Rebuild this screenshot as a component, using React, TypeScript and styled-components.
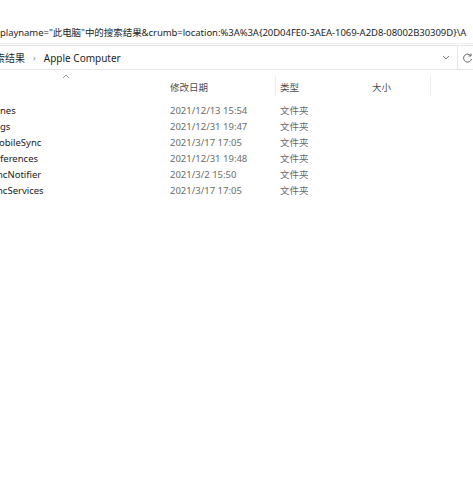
import { FC } from "react";
import styled, { createGlobalStyle } from "styled-components";

const GlobalStyle = createGlobalStyle`
	html, body {
		margin: 0;
		padding: 0;
		background: #fff;
	}
	body {
		font-family: "Noto Sans", "Noto Sans CJK SC", sans-serif;
		width: 473px;
		height: 477px;
		overflow: hidden;
	}
`;

const Page = styled.div`
	width: 473px;
	height: 477px;
	display: flex;
	flex-direction: column;
	overflow: hidden;
	background: #fff;
`;

const UrlLine = styled.div`
	height: 44px;
	box-sizing: border-box;
	padding-top: 25px;
	font-size: 9.5px;
	letter-spacing: -0.05px;
	line-height: 16px;
	color: #1e1e1e;
	white-space: nowrap;
	border-bottom: 1px solid #f0f0f0;
`;

const AddressBar = styled.div`
	margin-top: 1px;
	height: 25px;
	box-sizing: border-box;
	display: flex;
	align-items: center;
	border-top: 1px solid #e6e6e6;
	border-bottom: 1px solid #e6e6e6;
	font-size: 10px;
	color: #1e1e1e;
`;

const Crumbs = styled.div`
	flex: 1;
	display: flex;
	align-items: center;
	gap: 8px;
	white-space: nowrap;
`;

const CrumbHidden = styled.span`
	margin-left: -15px;
`;

const CrumbSep = styled.span`
	color: #888;
	font-size: 9px;
`;

const DropButton = styled.div`
	width: 22px;
	display: flex;
	justify-content: center;
	align-items: center;
`;

const Divider = styled.div`
	width: 1px;
	height: 23px;
	background: #e6e6e6;
`;

const RefreshButton = styled.div`
	width: 15px;
	display: flex;
	justify-content: flex-end;
	align-items: center;
`;

const HeaderRow = styled.div`
	position: relative;
	height: 27px;
	display: grid;
	grid-template-columns: 170px 105px 1px 96px 58px 1px;
	align-items: center;
	font-size: 9.5px;
	color: #4d4d4d;
	padding-top: 6px;
	box-sizing: border-box;
`;

const SortCaret = styled.svg`
	position: absolute;
	left: 62px;
	top: 4px;
`;

const HeadCell = styled.div<{ $pad?: number }>`
	padding-left: ${(p) => p.$pad ?? 0}px;
	white-space: nowrap;
`;

const ColLine = styled.div`
	width: 1px;
	height: 20px;
	background: #ececec;
	align-self: start;
`;

const List = styled.div`
	padding-top: 5px;
	display: flex;
	flex-direction: column;
`;

const Row = styled.div`
	height: 16px;
	display: grid;
	grid-template-columns: 170px 110px 1fr;
	align-items: center;
	font-size: 9.5px;
	white-space: nowrap;
`;

const NameCell = styled.div<{ $shift: number }>`
	color: #1a1a1a;
	margin-left: ${(p) => p.$shift}px;
`;

const MetaCell = styled.div`
	color: #6b6b6b;
`;

const rows = [
	{ name: "nes", shift: 0, date: "2021/12/13 15:54" },
	{ name: "gs", shift: 0, date: "2021/12/31 19:47" },
	{ name: "obileSync", shift: -1, date: "2021/3/17 17:05" },
	{ name: "ferences", shift: 0, date: "2021/12/31 19:48" },
	{ name: "ncNotifier", shift: -3, date: "2021/3/2 15:50" },
	{ name: "ncServices", shift: -3, date: "2021/3/17 17:05" },
];

const App: FC = () => {
	return (
		<Page>
			<GlobalStyle />
			<UrlLine>
				playname="此电脑"中的搜索结果&amp;crumb=location:%3A%3A{"{"}20D04FE0-3AEA-1069-A2D8-08002B30309D{"}"}\A
			</UrlLine>
			<AddressBar>
				<Crumbs>
					<CrumbHidden>搜索结果</CrumbHidden>
					<CrumbSep>›</CrumbSep>
					<span>Apple Computer</span>
				</Crumbs>
				<DropButton>
					<svg width="8" height="5" viewBox="0 0 8 5">
						<path d="M1 1 L4 4 L7 1" fill="none" stroke="#777" strokeWidth="1" />
					</svg>
				</DropButton>
				<Divider />
				<RefreshButton>
					<svg width="10" height="10" viewBox="0 0 10 10">
						<path d="M8 3 A4 4 0 1 0 8.5 6" fill="none" stroke="#666" strokeWidth="1" />
						<path d="M8 0.5 L8 3 L5.5 3" fill="none" stroke="#666" strokeWidth="1" />
					</svg>
				</RefreshButton>
			</AddressBar>
			<HeaderRow>
				<SortCaret width="8" height="5" viewBox="0 0 8 5">
					<path d="M1 4 L4 1 L7 4" fill="none" stroke="#999" strokeWidth="1" />
				</SortCaret>
				<HeadCell />
				<HeadCell>修改日期</HeadCell>
				<ColLine />
				<HeadCell $pad={4}>类型</HeadCell>
				<HeadCell>大小</HeadCell>
				<ColLine />
			</HeaderRow>
			<List>
				{rows.map((r) => (
					<Row key={r.name}>
						<NameCell $shift={r.shift}>{r.name}</NameCell>
						<MetaCell>{r.date}</MetaCell>
						<MetaCell>文件夹</MetaCell>
					</Row>
				))}
			</List>
		</Page>
	);
};

export default App;
